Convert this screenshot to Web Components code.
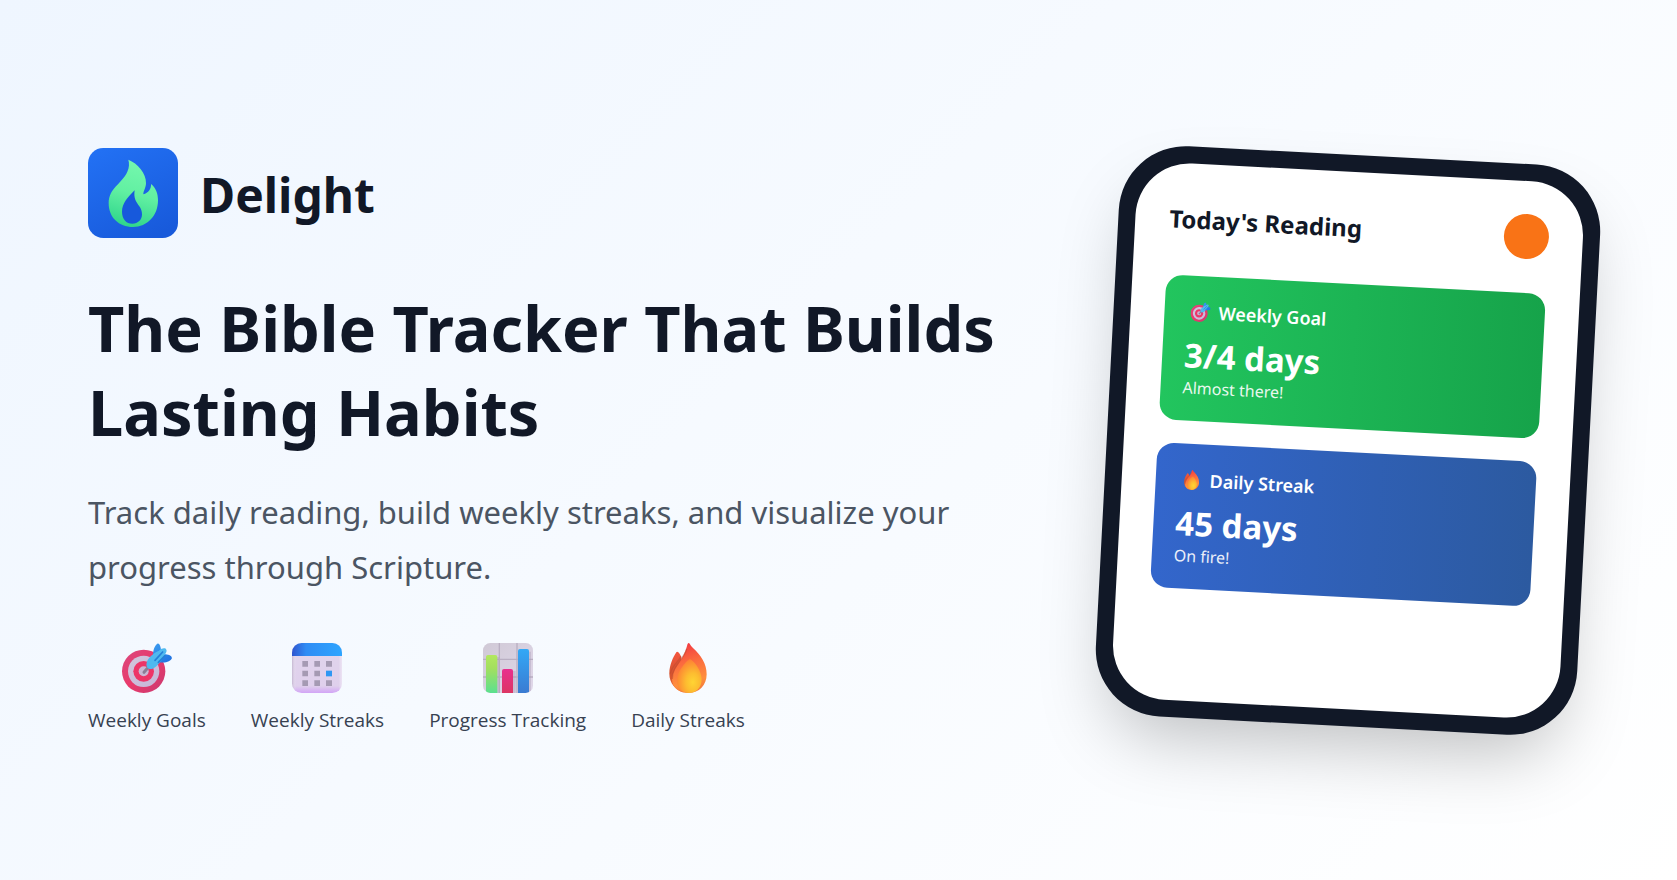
<!DOCTYPE html>
<html lang="en">
<head>
<meta charset="utf-8">
<meta name="viewport" content="width=device-width, initial-scale=1">
<title>Delight</title>
<style>
  html, body { margin: 0; min-height: 100%; }
  body { font-family: "Noto Sans", "Open Sans", sans-serif; color: #111827; }
</style>
</head>
<body>
<promo-hero>
  <brand-mark slot="intro">Delight</brand-mark>
  <hero-copy slot="intro">
    <span slot="title">The Bible Tracker That Builds Lasting Habits</span>
    <span slot="text">Track daily reading, build weekly streaks, and visualize your progress through Scripture.</span>
  </hero-copy>
  <feature-list slot="intro">
    <feature-item icon="target">Weekly Goals</feature-item>
    <feature-item icon="calendar">Weekly Streaks</feature-item>
    <feature-item icon="chart">Progress Tracking</feature-item>
    <feature-item icon="flame">Daily Streaks</feature-item>
  </feature-list>
  <phone-preview slot="preview">
    <span slot="heading">Today's Reading</span>
    <stat-card icon="target" tone="green">
      <span slot="label">Weekly Goal</span>
      <span slot="value">3/4 days</span>
      <span slot="note">Almost there!</span>
    </stat-card>
    <stat-card icon="flame" tone="blue">
      <span slot="label">Daily Streak</span>
      <span slot="value">45 days</span>
      <span slot="note">On fire!</span>
    </stat-card>
  </phone-preview>
</promo-hero>

<script>
const define = (name, html, setup) => {
  const template = document.createElement('template');
  template.innerHTML = html;
  customElements.define(name, class extends HTMLElement {
    constructor() {
      super();
      this.attachShadow({ mode: 'open' }).append(template.content.cloneNode(true));
    }
    connectedCallback() { if (setup) setup(this, this.shadowRoot); }
  });
};

const icons = {
  target: `<svg viewBox="37 24 150 150" aria-hidden="true">
    <defs>
      <linearGradient id="rim" x1="0" y1="0" x2="1" y2="1"><stop stop-color="#d9487f"/><stop offset=".5" stop-color="#ea3a6b"/><stop offset="1" stop-color="#c83a72"/></linearGradient>
      <linearGradient id="ring" x1="0" y1="0" x2="1" y2="1"><stop stop-color="#d2c6dc"/><stop offset="1" stop-color="#c6b6d8"/></linearGradient>
      <linearGradient id="wing" x1="0" y1="0" x2="1" y2="1"><stop stop-color="#3b9df0"/><stop offset="1" stop-color="#1f6fe0"/></linearGradient>
    </defs>
    <circle cx="102" cy="109" r="65" fill="url(#rim)"/>
    <circle cx="102" cy="109" r="47" fill="url(#ring)"/>
    <circle cx="102" cy="109" r="31" fill="#ed3568"/>
    <circle cx="102" cy="109" r="15" fill="#c9b8d4"/>
    <path d="M103 112 116 97" stroke="#8b7d96" stroke-width="9" stroke-linecap="round"/>
    <path d="M131 68C128 50 134 33 143 26 149 23 153 34 154 45L155 60 168 58C180 59 189 65 186 71 180 82 160 84 143 82Z" fill="url(#wing)"/>
    <path d="M111 84C112 72 130 54 148 47 157 38 168 38 170 44 173 49 167 56 163 62 154 81 137 100 126 102 115 104 108 95 111 84Z" fill="#4fb9ef"/>
    <path d="M136 76 159 51M146 82 166 62" stroke="#2480d8" stroke-width="5" stroke-linecap="round"/>
  </svg>`,
  calendar: `<svg viewBox="641 39 150 150" aria-hidden="true">
    <defs>
      <linearGradient id="page" x1="0" y1="0" x2="0" y2="1"><stop stop-color="#e1d5ec"/><stop offset=".86" stop-color="#dfd0ec"/><stop offset="1" stop-color="#d2a4f6"/></linearGradient>
      <linearGradient id="edge"><stop stop-color="#a99bb5" stop-opacity=".5"/><stop offset=".08" stop-color="#fff" stop-opacity="0"/><stop offset=".93" stop-color="#fff" stop-opacity="0"/><stop offset="1" stop-color="#fff" stop-opacity=".4"/></linearGradient>
      <linearGradient id="band"><stop stop-color="#2f55cf"/><stop offset=".28" stop-color="#2f8cf4"/><stop offset="1" stop-color="#2ea5ff"/></linearGradient>
    </defs>
    <rect x="641" y="39" width="150" height="150" rx="29" fill="url(#page)"/>
    <rect x="641" y="39" width="150" height="150" rx="29" fill="url(#edge)"/>
    <path d="M641 78V68A29 29 0 0 1 670 39H762A29 29 0 0 1 791 68V78Z" fill="url(#band)"/>
    <path d="M672 93h17v17h-17zM708 93h17v17h-17zM743 93h18v17h-18zM672 122h17v17h-17zM708 122h17v17h-17zM672 151h17v17h-17zM708 151h17v17h-17zM743 151h18v17h-18z" fill="#a59ab3"/>
    <path d="M743 122h18v17h-18z" fill="#2f97f3"/>
  </svg>`,
  chart: `<svg viewBox="27 24 150 150" aria-hidden="true">
    <defs>
      <linearGradient id="g" x1="0" y1="0" x2="0" y2="1"><stop stop-color="#b2e85e"/><stop offset=".35" stop-color="#a3df5f"/><stop offset="1" stop-color="#5be08f"/></linearGradient>
      <linearGradient id="r" x1="0" y1="0" x2="0" y2="1"><stop stop-color="#e8308f"/><stop offset="1" stop-color="#dc3663"/></linearGradient>
      <linearGradient id="b" x1="0" y1="0" x2="0" y2="1"><stop stop-color="#33a8f6"/><stop offset="1" stop-color="#3a7bd2"/></linearGradient>
      <linearGradient id="p" x1="0" y1="0" x2="1" y2="1"><stop stop-color="#d0c9d6"/><stop offset="1" stop-color="#e0d8ea"/></linearGradient>
      <clipPath id="c"><rect x="27" y="24" width="150" height="150" rx="22"/></clipPath>
    </defs>
    <g clip-path="url(#c)">
      <path d="M27 24h150v150H27z" fill="url(#p)"/>
      <path d="M27 73h150M27 126h150M76 24v150M129 24v150" stroke="#b9afc2" stroke-width="4"/>
      <path d="M68 66h8v108h-8zM117 108h8v66h-8zM165 50h6v124h-6z" fill="#a99db8" opacity=".4"/>
      <path d="M36 174V66q0-6 6-6h22q6 0 6 6v108z" fill="url(#g)"/>
      <path d="M84 174v-66q0-6 6-6h21q6 0 6 6v66z" fill="url(#r)"/>
      <path d="M132 174V48q0-6 6-6h21q6 0 6 6v126z" fill="url(#b)"/>
    </g>
  </svg>`,
  flame: `<svg viewBox="25 24 150 150" aria-hidden="true">
    <defs>
      <linearGradient id="outer" x1=".5" y1="0" x2=".7" y2="1"><stop stop-color="#f23c42"/><stop offset=".35" stop-color="#fb6a3e"/><stop offset=".75" stop-color="#ff8f3d"/><stop offset="1" stop-color="#f0743a"/></linearGradient>
      <linearGradient id="side" x1=".5" y1="0" x2=".4" y2="1"><stop stop-color="#f4553f"/><stop offset=".6" stop-color="#d5542f"/><stop offset="1" stop-color="#ee6a37"/></linearGradient>
      <radialGradient id="core" cx=".64" cy=".68" r=".68"><stop stop-color="#ffd433"/><stop offset=".4" stop-color="#fdbd30"/><stop offset="1" stop-color="#fd8134"/></radialGradient>
    </defs>
    <path d="M68 50C72 50 76 58 79 64L94 150 88 172C62 166 44 144 44 116 44 88 56 66 64 53 65 51 66 50 68 50Z" fill="url(#side)"/>
    <path d="M103 24C107 27 108 33 115 39 139 61 156 86 156 118 156 151 133 174 102 174 75 174 51 158 52 130 54 101 86 78 97 33 98 28 100 23 103 24Z" fill="url(#outer)"/>
    <path d="M96 42C89 72 51 92 53 132M79 64C70 82 52 92 47 116" fill="none" stroke="#bf4a2f" stroke-width="4" opacity=".55"/>
    <path d="M106 73C112 73 140 102 141 132 141 157 126 174 103 174 80 174 66 158 67 136 68 105 100 73 106 73Z" fill="url(#core)"/>
  </svg>`
};

customElements.define('glyph-icon', class extends HTMLElement {
  static observedAttributes = ['name'];
  constructor() {
    super();
    this.attachShadow({ mode: 'open' });
  }
  attributeChangedCallback(attribute, before, name) {
    this.shadowRoot.innerHTML = `<style>
      :host { display: block; flex: none; }
      svg { display: block; width: 100%; height: 100%; }
    </style>${icons[name] || ''}`;
  }
});

define('promo-hero', `<style>
  :host { display: flex; box-sizing: border-box; min-height: 100vh; padding: 48px 88px; align-items: center; gap: 90px; overflow: hidden; background: linear-gradient(135deg, #eff6ff 0%, #fff 100%); }
  .intro { flex: 1; min-width: 0; display: flex; flex-direction: column; }
  @media (max-width: 1100px) { :host { flex-direction: column; padding: 48px 32px; } }
</style>
<main class="intro"><slot name="intro"></slot></main>
<slot name="preview"></slot>`);

define('brand-mark', `<style>
  :host { display: flex; align-items: center; gap: 22px; margin-bottom: 48px; font-weight: 700; font-size: 48px; line-height: 66px; }
  svg { width: 90px; height: 90px; flex: none; }
  span { padding-top: 4px; }
</style>
<svg viewBox="9 9 270 270" aria-hidden="true">
  <defs>
    <linearGradient id="tile" x1=".2" y1="0" x2=".7" y2="1"><stop stop-color="#2270f3"/><stop offset="1" stop-color="#185adb"/></linearGradient>
    <linearGradient id="fire" x1=".6" y1="0" x2=".4" y2="1"><stop stop-color="#76f8ae"/><stop offset=".5" stop-color="#62f0a2"/><stop offset="1" stop-color="#2fd58b"/></linearGradient>
  </defs>
  <rect x="9" y="9" width="270" height="270" rx="46" fill="url(#tile)"/>
  <path d="M130 44C158 55 184 85 183 114 183 129 175 137 175 148 190 144 199 131 198 117 213 129 219 146 219 166 219 212 187 246 144 246 101 246 71 217 71 174 71 129 111 116 127 80 133 67 133 55 130 44Z" fill="url(#fire)"/>
  <path d="M149 136C145 160 154 171 163 184 168 191 171 199 171 208 171 225 159 236 142 236 124 236 111 222 111 200 111 176 129 155 149 136Z" fill="#1759dc"/>
</svg>
<span><slot></slot></span>`);

define('hero-copy', `<style>
  :host { display: block; margin-bottom: 48px; }
  h1 { margin: 0 0 31px; font-size: 63px; font-weight: 700; line-height: 84px; }
  p { margin: 0; color: #4b5563; font-size: 31px; line-height: 55px; }
</style>
<h1><slot name="title"></slot></h1>
<p><slot name="text"></slot></p>`);

define('feature-list', `<style>
  :host { display: flex; flex-wrap: wrap; gap: 45px; }
</style><slot></slot>`);

define('feature-item', `<style>
  :host { display: flex; flex-direction: column; align-items: center; gap: 14px; color: #374151; font: 500 19px/26px "Open Sans", "Noto Sans", sans-serif; }
  glyph-icon { width: 50px; height: 50px; }
</style>
<glyph-icon></glyph-icon><span><slot></slot></span>`,
(host, root) => root.querySelector('glyph-icon').setAttribute('name', host.getAttribute('icon')));

define('phone-preview', `<style>
  :host { flex: none; box-sizing: border-box; width: 482px; max-width: 100%; min-height: 571px; padding: 17px; display: flex; border-radius: 67px; background: #111827; box-shadow: 0 35px 70px -17px rgba(0, 0, 0, .25); transform: rotate(3deg); }
  .screen { flex: 1; padding: 33px 34px; border-radius: 54px; background: #fff; }
  header { display: flex; align-items: center; justify-content: space-between; margin-bottom: 34px; }
  h2 { margin: 0; font-size: 24px; font-weight: 700; line-height: 34px; }
  .avatar { width: 45px; height: 45px; border-radius: 50%; background: #f97316; }
  .cards { display: grid; gap: 23px; }
</style>
<section class="screen">
  <header><h2><slot name="heading"></slot></h2><div class="avatar"></div></header>
  <div class="cards"><slot></slot></div>
</section>`);

define('stat-card', `<style>
  :host { display: block; padding: 22px; border-radius: 17px; color: #fff; }
  :host([tone="green"]) { background: linear-gradient(90deg, #22c55e, #16a34a); }
  :host([tone="blue"]) { background: linear-gradient(90deg, #3366cc, #2c5aa0); }
  .label { display: flex; align-items: center; gap: 8px; margin-bottom: 8px; padding: 1px 0 0 4px; font-size: 18px; font-weight: 600; line-height: 26px; }
  glyph-icon { width: 20px; height: 20px; }
  .value { font-size: 33px; font-weight: 700; line-height: 45px; }
  .note { font-size: 16px; line-height: 21px; opacity: .9; }
</style>
<div class="label"><glyph-icon></glyph-icon><slot name="label"></slot></div>
<div class="value"><slot name="value"></slot></div>
<div class="note"><slot name="note"></slot></div>`,
(host, root) => root.querySelector('glyph-icon').setAttribute('name', host.getAttribute('icon')));
</script>
</body>
</html>
